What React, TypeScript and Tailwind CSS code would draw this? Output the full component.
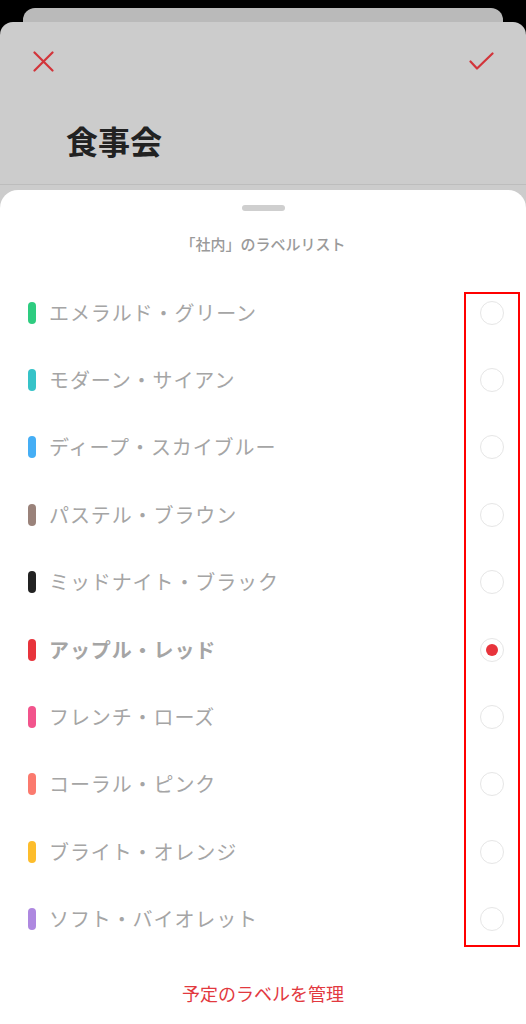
import React from "react";

type Label = { name: string; color: string };

const labels: Label[] = [
  { name: "エメラルド・グリーン", color: "bg-[#2ecc80]" },
  { name: "モダーン・サイアン", color: "bg-[#36c3c8]" },
  { name: "ディープ・スカイブルー", color: "bg-[#45aef5]" },
  { name: "パステル・ブラウン", color: "bg-[#9a827a]" },
  { name: "ミッドナイト・ブラック", color: "bg-[#222222]" },
  { name: "アップル・レッド", color: "bg-[#e8343c]" },
  { name: "フレンチ・ローズ", color: "bg-[#f2548c]" },
  { name: "コーラル・ピンク", color: "bg-[#fb7a6e]" },
  { name: "ブライト・オレンジ", color: "bg-[#fdbd2c]" },
  { name: "ソフト・バイオレット", color: "bg-[#ae88e0]" },
];

const selected = 5;

function LabelRow({ label, active }: { label: Label; active: boolean }) {
  return (
    <div className="h-[67.4px] flex items-center pl-[28px] pr-[22px]">
      <span className={`w-[8px] h-[22px] rounded-full ${label.color}`} />
      <span
        className={`ml-[13px] flex-1 text-[20px] leading-none tracking-[0.9px] text-[#a5a5a5] ${
          active ? "font-bold text-[#9a9a9a]" : "font-normal"
        }`}
      >
        {label.name}
      </span>
      <span className="w-[24px] h-[24px] rounded-full border border-[#e6e6e6] flex items-center justify-center">
        {active && <span className="w-[12px] h-[12px] rounded-full bg-[#e8343c]" />}
      </span>
    </div>
  );
}

export default function App() {
  return (
    <div
      className="relative w-[526px] h-[1024px] bg-black overflow-hidden flex flex-col"
      style={{ fontFamily: '"Noto Sans CJK JP", "Noto Sans", sans-serif' }}
    >
      {/* stacked card behind */}
      <div className="mt-[8px] mx-[23px] h-[14px] rounded-t-[12px] bg-[#bababa]" />

      {/* event card */}
      <div className="flex-1 flex flex-col rounded-t-[13px] bg-[#cccccc]">
        <div className="flex items-center justify-between pt-[29px] pl-[33px] pr-[32px]">
          <svg width="21" height="21" viewBox="0 0 21 21" fill="none">
            <path d="M1.5 1.5 L19.5 19.5 M19.5 1.5 L1.5 19.5" stroke="#d2343a" strokeWidth="2.2" strokeLinecap="round" />
          </svg>
          <svg width="25" height="19" viewBox="0 0 25 19" fill="none">
            <path d="M1.5 9.5 L8 16.5 L23.5 1.5" stroke="#d2343a" strokeWidth="2.2" strokeLinecap="round" strokeLinejoin="round" />
          </svg>
        </div>
        <h1 className="mt-[50px] pl-[66px] text-[32px] leading-[36px] font-bold text-[#222222]">食事会</h1>
        <div className="mt-[26px] border-b border-[#bdbdbd]" />

        {/* label sheet */}
        <div className="mt-[5px] flex-1 flex flex-col items-stretch rounded-t-[18px] bg-white">
          <div className="mt-[15px] self-center w-[43px] h-[6px] rounded-full bg-[#cfcfcf]" />
          <p className="mt-[23px] text-center text-[15px] leading-[20px] font-medium text-[#9a9a9a]">
            「社内」のラベルリスト
          </p>
          <div className="mt-[25px] flex flex-col">
            {labels.map((l, i) => (
              <LabelRow key={l.name} label={l} active={i === selected} />
            ))}
          </div>
          <p className="mt-[28px] text-center text-[18px] leading-[24px] text-[#e2393f]">予定のラベルを管理</p>
        </div>
      </div>

      {/* highlight annotation */}
      <div className="absolute left-[464px] top-[292px] w-[56px] h-[655px] border-2 border-[#ff0000]" />
    </div>
  );
}
